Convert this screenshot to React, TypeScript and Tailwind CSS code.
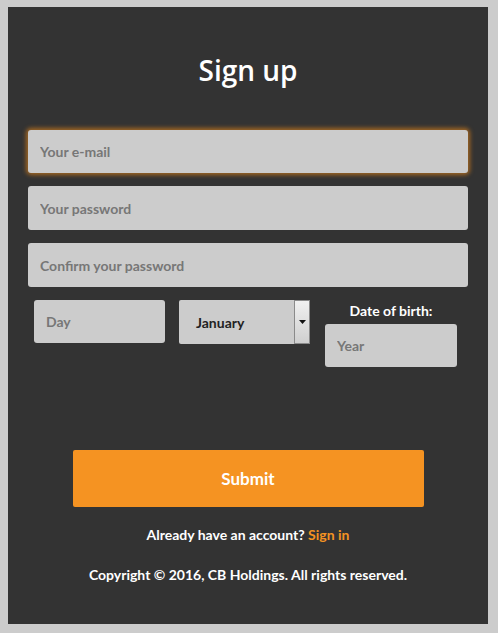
import React from "react";

export default function App() {
  const input =
    "w-full rounded-[3px] bg-[#cccccc] px-3 text-[14px] font-bold text-[#6f6f6f] placeholder:text-[#777777] outline-none";
  return (
    <div className="min-h-[633px] w-[498px] bg-[#cccccc] pt-[7px] pl-[8px]" style={{ fontFamily: "Lato, sans-serif" }}>
      <div className="flex h-[617px] w-[480px] flex-col bg-[#333333] px-[20px]">
        <h1 className="mt-[44px] text-center text-[28px] font-semibold leading-[38px] text-white" style={{ fontFamily: "'Open Sans', sans-serif" }}>Sign up</h1>
        <div className="mt-[41px] flex flex-col gap-[13px]">
          <input className={`${input} h-[43px] shadow-[0_0_4px_2px_rgba(200,120,30,0.75)]`} placeholder="Your e-mail" />
          <input className={`${input} h-[44px]`} placeholder="Your password" />
          <input className={`${input} h-[44px]`} placeholder="Confirm your password" />
        </div>
        <div className="mt-[13px] flex items-start px-[6px]">
          <input className="h-[43px] w-[131px] rounded-[3px] bg-[#cccccc] px-3 text-[14px] font-bold placeholder:text-[#777777] outline-none" placeholder="Day" />
          <div className="ml-[14px] flex h-[44px] w-[131px] rounded-[2px] bg-[#cccccc]">
            <div className="flex flex-1 items-center pl-[17px] text-[14px] font-bold text-[#222]">January</div>
            <div className="flex w-[16px] items-center justify-center border border-[#8a8a8a] bg-gradient-to-b from-[#f0f0f0] to-[#cfcfcf]">
              <svg width="7" height="4" viewBox="0 0 7 4"><path d="M0 0h7L3.5 4z" fill="#111" /></svg>
            </div>
          </div>
          <div className="ml-[15px] flex w-[132px] flex-col items-center">
            <div className="h-[24px] pt-[1px] text-[14px] font-bold leading-[20px] text-white">Date of birth:</div>
            <input className="h-[43px] w-full rounded-[3px] bg-[#cccccc] px-3 text-[14px] font-bold placeholder:text-[#777777] outline-none" placeholder="Year" />
          </div>
        </div>
        <button className="mx-auto mt-[83px] h-[57px] w-[351px] rounded-[2px] bg-[#f59322] text-[17px] font-bold text-white">Submit</button>
        <p className="mt-[18px] text-center text-[14px] font-bold leading-[20px] text-white">
          Already have an account? <span className="text-[#f59322]">Sign in</span>
        </p>
        <p className="mt-[20px] text-center text-[14px] font-bold leading-[20px] text-white">
          Copyright © 2016, CB Holdings. All rights reserved.
        </p>
      </div>
    </div>
  );
}
